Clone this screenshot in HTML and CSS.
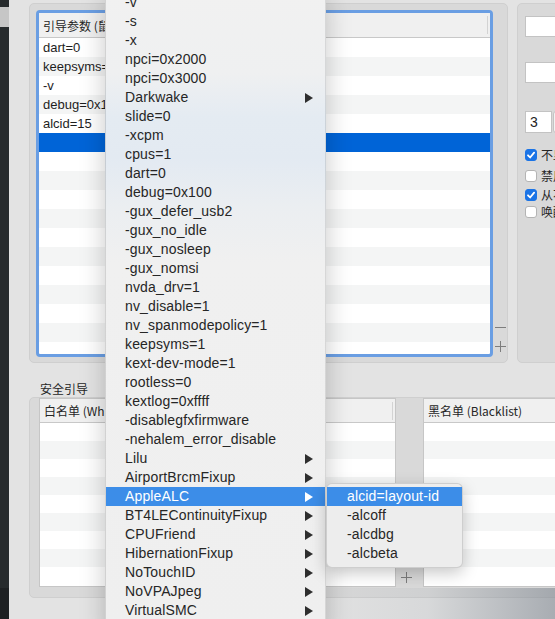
FILE: index.html
```html
<!DOCTYPE html>
<html lang="zh-CN">
<head>
<meta charset="utf-8">
<title>Boot</title>
<link rel="stylesheet" href="styles.css">
</head>
<body>
<div class="app">
  <div class="sidebar"><div class="sb-sel"></div></div>
  <div class="main">
    <div class="top-row">
      <div class="box box-args">
        <div class="table args">
          <div class="thead"><span>引导参数 (鼠标右键点击添加)</span><i class="sep"></i></div>
          <div class="tbody">
            <div class="row">dart=0</div>
            <div class="row">keepsyms=1</div>
            <div class="row">-v</div>
            <div class="row">debug=0x100</div>
            <div class="row">alcid=15</div>
            <div class="row selected"></div>
            <div class="row"></div>
            <div class="row"></div>
            <div class="row"></div>
            <div class="row"></div>
            <div class="row"></div>
            <div class="row"></div>
            <div class="row"></div>
            <div class="row"></div>
            <div class="row"></div>
            <div class="row"></div>
            <div class="row"></div>
          </div>
        </div>
        <div class="tools">
          <span class="tool"><i class="minus"></i></span>
          <span class="tool"><svg width="11" height="11" viewBox="0 0 11 11"><path d="M5.5 0V11M0 5.5H11" stroke="#7d7d7d" stroke-width="1" fill="none"/></svg></span>
        </div>
      </div>
      <div class="box box-opts">
        <div class="field"></div>
        <div class="field f2"></div>
        <div class="num-row"><div class="num">3</div><div class="stepper"></div></div>
        <div class="checks">
          <div class="check c1"><span class="cb on"><svg width="12" height="12" viewBox="0 0 12 12"><path d="M3 6.3L5.1 8.5L9.1 3.6" stroke="#fff" stroke-width="1.8" fill="none" stroke-linecap="round" stroke-linejoin="round"/></svg></span><span class="lbl">不显示启动项</span></div>
          <div class="check c2"><span class="cb"></span><span class="lbl">禁用休眠</span></div>
          <div class="check c3"><span class="cb on"><svg width="12" height="12" viewBox="0 0 12 12"><path d="M3 6.3L5.1 8.5L9.1 3.6" stroke="#fff" stroke-width="1.8" fill="none" stroke-linecap="round" stroke-linejoin="round"/></svg></span><span class="lbl">从不休眠</span></div>
          <div class="check c4"><span class="cb"></span><span class="lbl">唤醒时</span></div>
        </div>
      </div>
    </div>
    <div class="section-title">安全引导</div>
    <div class="box box-safe">
      <div class="table list wl">
        <div class="thead"><span>白名单 (Whitelist)</span><i class="sep"></i></div>
        <div class="tbody">
          <div class="row s"></div><div class="row s"></div><div class="row s"></div><div class="row s"></div><div class="row s"></div>
          <div class="row s"></div><div class="row s"></div><div class="row s"></div><div class="row s"></div>
        </div>
      </div>
      <div class="gap-tools">
        <span class="tool"><i class="minus"></i></span>
        <span class="tool"><svg width="11" height="11" viewBox="0 0 11 11"><path d="M5.5 0V11M0 5.5H11" stroke="#7d7d7d" stroke-width="1" fill="none"/></svg></span>
      </div>
      <div class="table list bl">
        <div class="thead"><span>黑名单 (Blacklist)</span></div>
        <div class="tbody">
          <div class="row s"></div><div class="row s"></div><div class="row s"></div><div class="row s"></div><div class="row s"></div>
          <div class="row s"></div><div class="row s"></div><div class="row s"></div><div class="row s"></div>
        </div>
      </div>
    </div>
  </div>
</div>
<div class="corner-shade"></div>

<div class="menu">
  <div class="mi">-v</div>
  <div class="mi">-s</div>
  <div class="mi">-x</div>
  <div class="mi">npci=0x2000</div>
  <div class="mi">npci=0x3000</div>
  <div class="mi sub">Darkwake<i class="arr"></i></div>
  <div class="mi">slide=0</div>
  <div class="mi">-xcpm</div>
  <div class="mi">cpus=1</div>
  <div class="mi">dart=0</div>
  <div class="mi">debug=0x100</div>
  <div class="mi">-gux_defer_usb2</div>
  <div class="mi">-gux_no_idle</div>
  <div class="mi">-gux_nosleep</div>
  <div class="mi">-gux_nomsi</div>
  <div class="mi">nvda_drv=1</div>
  <div class="mi">nv_disable=1</div>
  <div class="mi">nv_spanmodepolicy=1</div>
  <div class="mi">keepsyms=1</div>
  <div class="mi">kext-dev-mode=1</div>
  <div class="mi">rootless=0</div>
  <div class="mi">kextlog=0xffff</div>
  <div class="mi">-disablegfxfirmware</div>
  <div class="mi">-nehalem_error_disable</div>
  <div class="mi sub">Lilu<i class="arr"></i></div>
  <div class="mi sub">AirportBrcmFixup<i class="arr"></i></div>
  <div class="mi sub hl">AppleALC<i class="arr"></i></div>
  <div class="mi sub">BT4LEContinuityFixup<i class="arr"></i></div>
  <div class="mi sub">CPUFriend<i class="arr"></i></div>
  <div class="mi sub">HibernationFixup<i class="arr"></i></div>
  <div class="mi sub">NoTouchID<i class="arr"></i></div>
  <div class="mi sub">NoVPAJpeg<i class="arr"></i></div>
  <div class="mi sub">VirtualSMC<i class="arr"></i></div>
</div>

<div class="submenu">
  <div class="mi hl">alcid=layout-id</div>
  <div class="mi">-alcoff</div>
  <div class="mi">-alcdbg</div>
  <div class="mi">-alcbeta</div>
</div>
</body>
</html>
```

FILE: styles.css
```css
* { box-sizing: border-box; }
html, body { margin: 0; padding: 0; }
body {
  width: 555px;
  height: 619px;
  overflow: hidden;
  position: relative;
  background: #e3e3e3;
  font-family: "Liberation Sans", "Noto Sans CJK SC", sans-serif;
  color: #222;
}
.app { display: flex; height: 619px; }
.sidebar {
  width: 9px;
  flex-shrink: 0;
  padding-top: 7px;
  background: linear-gradient(to bottom, #272b2d 0, #272b2d 588px, #1e2123 588px);
}
.sb-sel { height: 20px; background: #c6c6c6; }
.main {
  flex: 1;
  min-width: 0;
  overflow: hidden;
  padding: 3px 0 0 20px;
  display: flex;
  flex-direction: column;
}
.top-row { display: flex; gap: 9px; height: 360px; flex-shrink: 0; }
.box {
  background: #d9d9d9;
  border: 1px solid #cfcfcf;
  border-radius: 5px;
  flex-shrink: 0;
}
.box-args {
  width: 479px;
  padding: 6px 0 0 6px;
  display: flex;
  align-items: flex-start;
}
.table { background: #fff; overflow: hidden; flex-shrink: 0; }
.args {
  width: 457px;
  height: 347px;
  border: 3px solid #6a9ee3;
  border-radius: 4px;
}
.thead {
  height: 25px;
  background: #f0f0f0;
  border-bottom: 1px solid #c8c8c8;
  display: flex;
  align-items: center;
  justify-content: space-between;
  padding-left: 4px;
  font-size: 12px;
  color: #262626;
  font-family: "Noto Sans CJK SC", "Liberation Sans", sans-serif;
  white-space: nowrap;
}
.thead .sep { width: 1px; height: 18px; background: #d3d3d3; margin-right: 2px; }
.row {
  height: 19px;
  line-height: 19px;
  padding-left: 4px;
  font-size: 13px;
  color: #1e1e1e;
  white-space: nowrap;
}
.row:nth-child(even) { background: #f4f5f5; }
.row.selected { background: #0064d7; }
.tools {
  align-self: flex-end;
  width: 14px;
  margin-bottom: 6px;
  display: flex;
  flex-direction: column;
  align-items: center;
}
.tool { height: 19px; display: flex; align-items: center; justify-content: center; }
.minus { display: block; width: 11px; height: 1px; background: #7d7d7d; }

.box-opts { width: 220px; padding: 12px 0 0 7px; }
.field { width: 120px; height: 21px; background: #fff; border: 1px solid #c3c3c3; }
.f2 { margin-top: 25px; }
.num-row { margin-top: 28px; display: flex; gap: 1px; }
.num {
  width: 27px; height: 22px; background: #fff; border: 1px solid #c3c3c3;
  font-size: 14px; line-height: 20px; padding-left: 4px; color: #1e1e1e;
}
.stepper { width: 14px; height: 22px; border: 1px solid #c3c3c3; border-radius: 3px; background: #f2f2f2; }
.checks { margin-top: 16px; }
.check { display: flex; align-items: flex-start; gap: 4px; font-size: 12px; white-space: nowrap; }
.c1 { height: 21px; }
.c2 { height: 19px; }
.c3 { height: 17px; }
.c4 { height: 17px; }
.cb {
  width: 12px; height: 12px; border-radius: 3px;
  background: #fff; border: 1px solid #b4b4b4;
  display: flex; flex-shrink: 0;
}
.cb.on { background: #1b74e6; border-color: #1b74e6; }
.cb.on svg { margin: -1px; }
.lbl {
  line-height: 12px;
  color: #262626;
  font-family: "Noto Sans CJK SC", sans-serif;
}

.section-title {
  height: 34px;
  flex-shrink: 0;
  display: flex;
  align-items: flex-end;
  padding: 0 0 1px 11px;
  font-size: 12px;
  line-height: 14px;
  color: #262626;
  font-family: "Noto Sans CJK SC", sans-serif;
}
.box-safe {
  width: 700px;
  height: 201px;
  padding: 0 0 0 9px;
  display: flex;
  align-items: flex-start;
}
.list { height: 189px; border: 1px solid #c6c6c6; }
.list .thead { height: 24px; }
.wl { width: 357px; }
.bl { width: 240px; }
.row.s { height: 18px; }
.gap-tools {
  width: 27px;
  height: 189px;
  display: flex;
  flex-direction: column;
  justify-content: flex-end;
  padding-left: 4px;
  flex-shrink: 0;
}
.gap-tools .tool { width: 13px; }

.corner-shade {
  position: absolute;
  left: 300px;
  right: 0;
  top: 588px;
  bottom: 0;
  background: linear-gradient(to right, rgba(150,158,166,0) 0, rgba(150,158,166,0.15) 50%, rgba(120,128,138,0.55) 100%);
  pointer-events: none;
}

.menu {
  position: absolute;
  left: 105px;
  top: -7px;
  width: 221px;
  height: 640px;
  background: linear-gradient(180deg, #f1f1f1 0, #eff0f1 80px, #e4ebf2 125px, #e3eaf2 165px, #ebeef1 215px, #f0f0f0 270px, #efefef 100%);
  border-left: 1px solid rgba(0,0,0,0.12);
  border-right: 1px solid rgba(0,0,0,0.10);
  box-shadow: 0 6px 24px rgba(0,0,0,0.22);
  font-size: 14px;
  color: #262626;
}
.mi {
  height: 19px;
  line-height: 19px;
  padding: 0 12px 0 19px;
  display: flex;
  align-items: center;
  justify-content: space-between;
  white-space: nowrap;
  letter-spacing: 0.15px;
}
.arr {
  width: 0; height: 0;
  border-left: 8px solid #2e2e2e;
  border-top: 5px solid transparent;
  border-bottom: 5px solid transparent;
}
.mi.hl { background: #3c8de8; color: #fff; }
.mi.hl .arr { border-left-color: #fff; }

.submenu {
  position: absolute;
  left: 326px;
  top: 483px;
  width: 137px;
  padding: 3px 0 4px;
  background: #ededed;
  border: 1px solid rgba(0,0,0,0.13);
  border-radius: 6px;
  box-shadow: 0 5px 16px rgba(0,0,0,0.22);
  font-size: 14px;
  color: #262626;
}
.submenu .mi { padding-left: 20px; }
```
